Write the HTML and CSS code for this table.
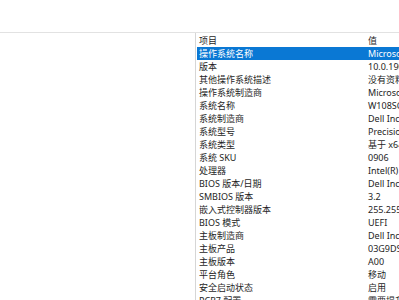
FILE: index.html
```html
<!DOCTYPE html>
<html lang="zh-CN">
<head>
<meta charset="utf-8">
<title>系统信息</title>
<link rel="stylesheet" href="styles.css">
</head>
<body>
<div class="top"></div>
<div class="main">
  <div class="tree"></div>
  <div class="details">
    <div class="row head"><span class="k">项目</span><span class="v">值</span></div>
    <div class="row sel"><span class="k">操作系统名称</span><span class="v">Microsoft Windows 10 专业版</span></div>
    <div class="row"><span class="k">版本</span><span class="v">10.0.19045 版本 19045</span></div>
    <div class="row"><span class="k">其他操作系统描述</span><span class="v">没有资料</span></div>
    <div class="row"><span class="k">操作系统制造商</span><span class="v">Microsoft Corporation</span></div>
    <div class="row"><span class="k">系统名称</span><span class="v">W108SG2</span></div>
    <div class="row"><span class="k">系统制造商</span><span class="v">Dell Inc.</span></div>
    <div class="row"><span class="k">系统型号</span><span class="v">Precision 5540</span></div>
    <div class="row"><span class="k">系统类型</span><span class="v">基于 x64 的电脑</span></div>
    <div class="row"><span class="k">系统 SKU</span><span class="v">0906</span></div>
    <div class="row"><span class="k">处理器</span><span class="v">Intel(R) Core(TM) i7-9850H</span></div>
    <div class="row"><span class="k">BIOS 版本/日期</span><span class="v">Dell Inc. 1.20.0</span></div>
    <div class="row"><span class="k">SMBIOS 版本</span><span class="v">3.2</span></div>
    <div class="row"><span class="k">嵌入式控制器版本</span><span class="v">255.255</span></div>
    <div class="row"><span class="k">BIOS 模式</span><span class="v">UEFI</span></div>
    <div class="row"><span class="k">主板制造商</span><span class="v">Dell Inc.</span></div>
    <div class="row"><span class="k">主板产品</span><span class="v">03G9DS</span></div>
    <div class="row"><span class="k">主板版本</span><span class="v">A00</span></div>
    <div class="row"><span class="k">平台角色</span><span class="v">移动</span></div>
    <div class="row"><span class="k">安全启动状态</span><span class="v">启用</span></div>
    <div class="row"><span class="k">PCR7 配置</span><span class="v">需要提升才能查看</span></div>
  </div>
</div>
</body>
</html>
```

FILE: styles.css
```css
html, body {
  margin: 0;
  padding: 0;
  background: #ffffff;
  overflow: hidden;
}
body {
  width: 399px;
  height: 300px;
  font-family: "Segoe UI", "Noto Sans", "Noto Sans CJK SC", sans-serif;
  font-size: 9px;
  color: #1e1e1e;
}
.top {
  height: 32px;
  border-bottom: 1px solid #e2e2e2;
}
.main {
  display: flex;
  height: 267px;
}
.tree {
  width: 195px;
  flex: none;
  border-right: 1px solid #d6d6d6;
}
.details {
  flex: 1;
  overflow: hidden;
  padding-top: 1px;
}
.row {
  display: flex;
  height: 13px;
  line-height: 13px;
  white-space: nowrap;
  margin-left: 1px;
}
.row.head {
  height: 13px;
}
.k {
  width: 168px;
  flex: none;
  padding-left: 2px;
  box-sizing: border-box;
}
.v {
  padding-left: 3px;
}
.row.sel {
  background: #0a78d4;
  color: #ffffff;
}
```
